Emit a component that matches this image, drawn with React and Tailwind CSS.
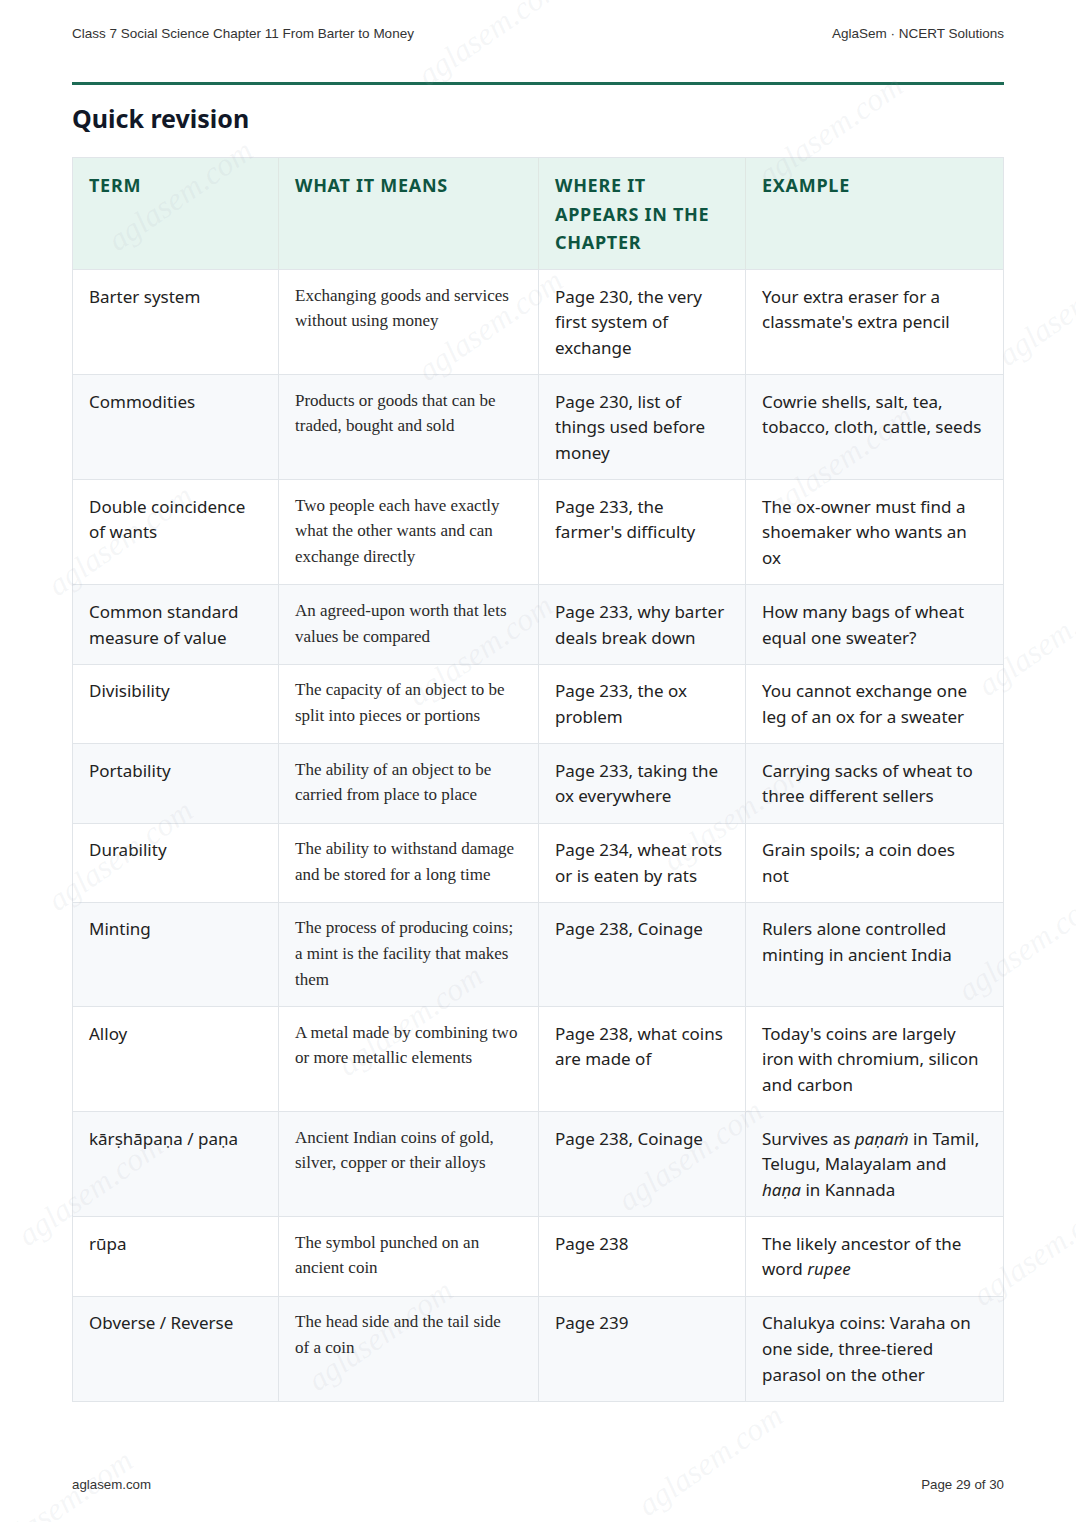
import React from "react";

const rows = [
  ["Barter system", "Exchanging goods and services without using money", "Page 230, the very first system of exchange", "Your extra eraser for a classmate's extra pencil"],
  ["Commodities", "Products or goods that can be traded, bought and sold", "Page 230, list of things used before money", "Cowrie shells, salt, tea, tobacco, cloth, cattle, seeds"],
  ["Double coincidence of wants", "Two people each have exactly what the other wants and can exchange directly", "Page 233, the farmer's difficulty", "The ox-owner must find a shoemaker who wants an ox"],
  ["Common standard measure of value", "An agreed-upon worth that lets values be compared", "Page 233, why barter deals break down", "How many bags of wheat equal one sweater?"],
  ["Divisibility", "The capacity of an object to be split into pieces or portions", "Page 233, the ox problem", "You cannot exchange one leg of an ox for a sweater"],
  ["Portability", "The ability of an object to be carried from place to place", "Page 233, taking the ox everywhere", "Carrying sacks of wheat to three different sellers"],
  ["Durability", "The ability to withstand damage and be stored for a long time", "Page 234, wheat rots or is eaten by rats", "Grain spoils; a coin does not"],
  ["Minting", "The process of producing coins; a mint is the facility that makes them", "Page 238, Coinage", "Rulers alone controlled minting in ancient India"],
  ["Alloy", "A metal made by combining two or more metallic elements", "Page 238, what coins are made of", "Today's coins are largely iron with chromium, silicon and carbon"],
  ["kārṣhāpaṇa / paṇa", "Ancient Indian coins of gold, silver, copper or their alloys", "Page 238, Coinage", (
    <>Survives as <i>paṇaṁ</i> in Tamil, Telugu, Malayalam and <i>haṇa</i> in Kannada</>
  )],
  ["rūpa", "The symbol punched on an ancient coin", "Page 238", (<>The likely ancestor of the word <i>rupee</i></>)],
  ["Obverse / Reverse", "The head side and the tail side of a coin", "Page 239", "Chalukya coins: Varaha on one side, three-tiered parasol on the other"],
];

const marks = [
  [490, 30], [180, 195], [830, 130], [490, 325], [1070, 310], [840, 460], [120, 540],
  [1050, 640], [480, 650], [735, 815], [120, 855], [1030, 945], [410, 1020], [90, 1190],
  [690, 1155], [1045, 1250], [380, 1335], [710, 1460], [60, 1505],
];

const sans = { fontFamily: '"Noto Sans", "Open Sans", sans-serif' };

export default function App() {
  return (
    <div className="relative w-[1076px] h-[1522px] bg-white overflow-hidden" style={sans}>
      <div className="flex flex-col h-full px-[72px]">
        <div className="flex justify-between pt-[26px] text-[13.5px] text-[#333] font-['Liberation_Sans',Arial,sans-serif] leading-[16px]">
          <span>Class 7 Social Science Chapter 11 From Barter to Money</span>
          <span>AglaSem · NCERT Solutions</span>
        </div>
        <div className="mt-[40px] h-[3px] bg-[#1d6b55]" />
        <h1 className="mt-[16px] text-[25px] font-bold text-[#111827] leading-[34px]">Quick revision</h1>
        <div className="mt-[22px] border border-[#e1e5e9]">
          <div className="grid grid-cols-[206px_260px_207px_1fr] bg-[#e6f4ef] text-[#0e5541] text-[18px] font-bold tracking-[0.04em] leading-[28.5px]">
            <div className="px-[16px] pt-[13px] pb-[13px] h-[111px] border-r border-[#dfe7e3]">TERM</div>
            <div className="px-[16px] pt-[13px] border-r border-[#dfe7e3]">WHAT IT MEANS</div>
            <div className="px-[16px] pt-[13px] border-r border-[#dfe7e3]">WHERE IT APPEARS IN THE CHAPTER</div>
            <div className="px-[16px] pt-[13px]">EXAMPLE</div>
          </div>
          {rows.map((r, i) => (
            <div
              key={i}
              className={`grid grid-cols-[206px_260px_207px_1fr] border-t border-[#e1e5e9] text-[17px] leading-[25.7px] text-[#222] ${i % 2 === 1 ? "bg-[#f7f9fb]" : "bg-white"}`}
            >
              <div className="px-[16px] py-[13.5px] border-r border-[#e1e5e9]">{r[0]}</div>
              <div className="pl-[16px] pr-[20px] pt-[12.5px] pb-[13.5px] border-r border-[#e1e5e9] font-['Liberation_Serif','Times_New_Roman',serif] text-[17px] text-[#2a2a2a]">{r[1]}</div>
              <div className="px-[16px] py-[13.5px] border-r border-[#e1e5e9]">{r[2]}</div>
              <div className="pl-[16px] pr-[18px] py-[13.5px]">{r[3]}</div>
            </div>
          ))}
        </div>
        <div className="mt-auto mb-[29px] flex justify-between text-[13.3px] text-[#333] font-['Liberation_Sans',Arial,sans-serif] leading-[16px]">
          <span>aglasem.com</span>
          <span>Page 29 of 30</span>
        </div>
      </div>
      {marks.map(([x, y], i) => (
        <div
          key={i}
          className="absolute pointer-events-none text-[32px] italic text-[#9ca3af]/10 font-['Liberation_Serif',serif] -rotate-[35deg] whitespace-nowrap -translate-x-1/2 -translate-y-1/2"
          style={{ left: x, top: y }}
        >
          aglasem.com
        </div>
      ))}
    </div>
  );
}
